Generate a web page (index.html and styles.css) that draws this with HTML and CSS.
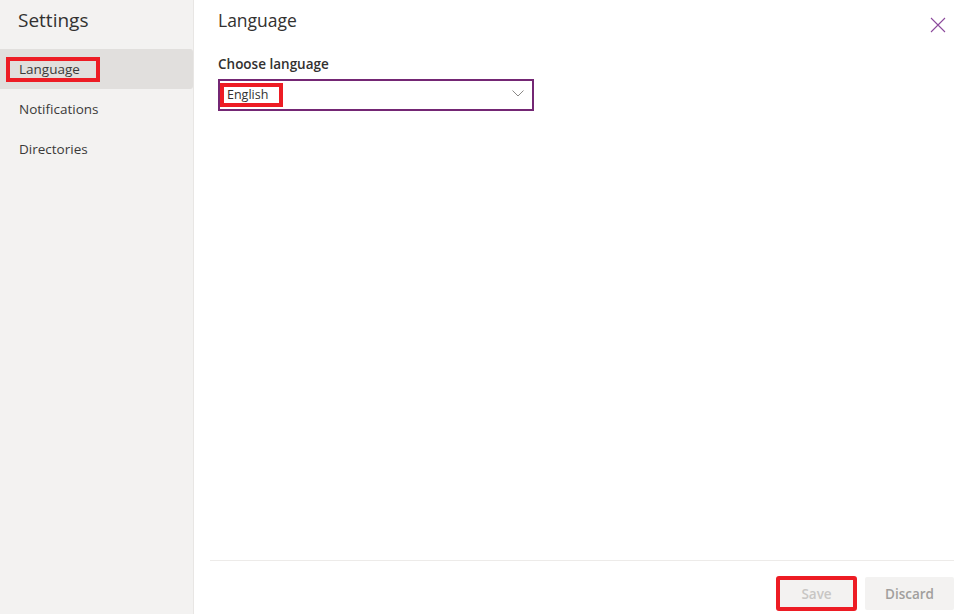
FILE: index.html
```html
<!DOCTYPE html>
<html lang="en">
<head>
  <meta charset="UTF-8" />
  <meta name="viewport" content="width=device-width, initial-scale=1.0"/>
  <title>Settings</title>
  <link rel="stylesheet" href="styles.css">
</head>
<body>
  <div class="panel">
    <nav class="sidebar">
      <h1 class="sidebar-title">Settings</h1>
      <ul class="nav">
        <li class="nav-item active"><span class="mark nav-mark">Language</span></li>
        <li class="nav-item">Notifications</li>
        <li class="nav-item">Directories</li>
      </ul>
    </nav>

    <main class="content">
      <div class="content-head">
        <h2>Language</h2>
        <button class="close" aria-label="Close">
          <svg width="16" height="16" viewBox="0 0 16 16">
            <path d="M1 1 L15 15 M15 1 L1 15" stroke="#8c4a9c" stroke-width="1.1" fill="none"/>
          </svg>
        </button>
      </div>

      <div class="field">
        <label for="language">Choose language</label>
        <div class="dropdown" id="language">
          <span class="mark value-mark">English</span>
          <svg class="chevron" width="12" height="7" viewBox="0 0 12 7">
            <path d="M0.5 0.5 L6 6 L11.5 0.5" stroke="#8a8886" stroke-width="1" fill="none"/>
          </svg>
        </div>
      </div>

      <div class="actions">
        <button class="btn btn-save" disabled>Save</button>
        <button class="btn btn-discard" disabled>Discard</button>
      </div>
    </main>
  </div>
</body>
</html>
```

FILE: styles.css
```css
body {
  font-family: 'Open Sans', 'Noto Sans', sans-serif;
  background-color: #ffffff;
  color: #323130;
  margin: 0;
  padding: 0;
}

.panel {
  display: flex;
  height: 614px;
}

.sidebar {
  width: 193px;
  flex-shrink: 0;
  background-color: #f3f2f1;
  border-right: 1px solid #e8e6e4;
}

.sidebar-title {
  margin: 0 0 15px;
  padding: 6px 0 0 18px;
  font-size: 19px;
  line-height: 28px;
  font-weight: 400;
  color: #323130;
}

.nav {
  list-style: none;
  margin: 0;
  padding: 0;
}

.nav-item {
  height: 40px;
  display: flex;
  align-items: center;
  padding-left: 19px;
  font-size: 13.5px;
  color: #3b3a39;
}

.nav-item.active {
  background-color: #e1dfdd;
  border-radius: 0 3px 3px 0;
  padding-left: 6px;
}

/* red annotation boxes */
.mark {
  border: 4px solid #ed1c24;
  box-sizing: border-box;
}

.nav-mark {
  display: inline-block;
  width: 94px;
  height: 25px;
  line-height: 16px;
  padding-left: 9px;
}

.content {
  flex: 1;
  display: flex;
  flex-direction: column;
  padding: 0 8px 0 16px;
}

.content-head {
  display: flex;
  justify-content: space-between;
  align-items: center;
  height: 40px;
  padding-left: 8px;
}

.content-head h2 {
  margin: 0;
  font-size: 17.5px;
  font-weight: 400;
  color: #323130;
}

.close {
  background: none;
  border: none;
  padding: 0;
  width: 32px;
  height: 32px;
  display: flex;
  align-items: center;
  justify-content: center;
  margin-top: 10px;
}

.field {
  padding-left: 8px;
  margin-top: 14px;
}

.field label {
  display: block;
  font-size: 13.5px;
  font-weight: 600;
  line-height: 20px;
  color: #323130;
  margin-bottom: 5px;
}

.dropdown {
  width: 316px;
  height: 32px;
  box-sizing: border-box;
  border: 2px solid #742774;
  display: flex;
  align-items: center;
  justify-content: space-between;
  padding-right: 8px;
}

.value-mark {
  display: inline-block;
  width: 63px;
  height: 24px;
  line-height: 16px;
  padding-left: 3px;
  font-size: 12.5px;
  color: #323130;
}

.chevron {
  margin-bottom: 3px;
}

.actions {
  margin-top: auto;
  border-top: 1px solid #edebe9;
  display: flex;
  justify-content: flex-end;
  gap: 9px;
  padding: 16px 0 4px;
}

.btn {
  font-family: inherit;
  min-width: 80px;
  height: 33px;
  padding: 0 18px;
  border: none;
  border-radius: 2px;
  background-color: #f3f2f1;
  color: #a19f9d;
  font-size: 13.5px;
  font-weight: 600;
}

.btn-discard {
  padding: 0 20px;
}

.btn-save {
  min-width: 79px;
  color: #c8c6c4;
  outline: 4px solid #ed1c24;
  outline-offset: -3px;
}
```
